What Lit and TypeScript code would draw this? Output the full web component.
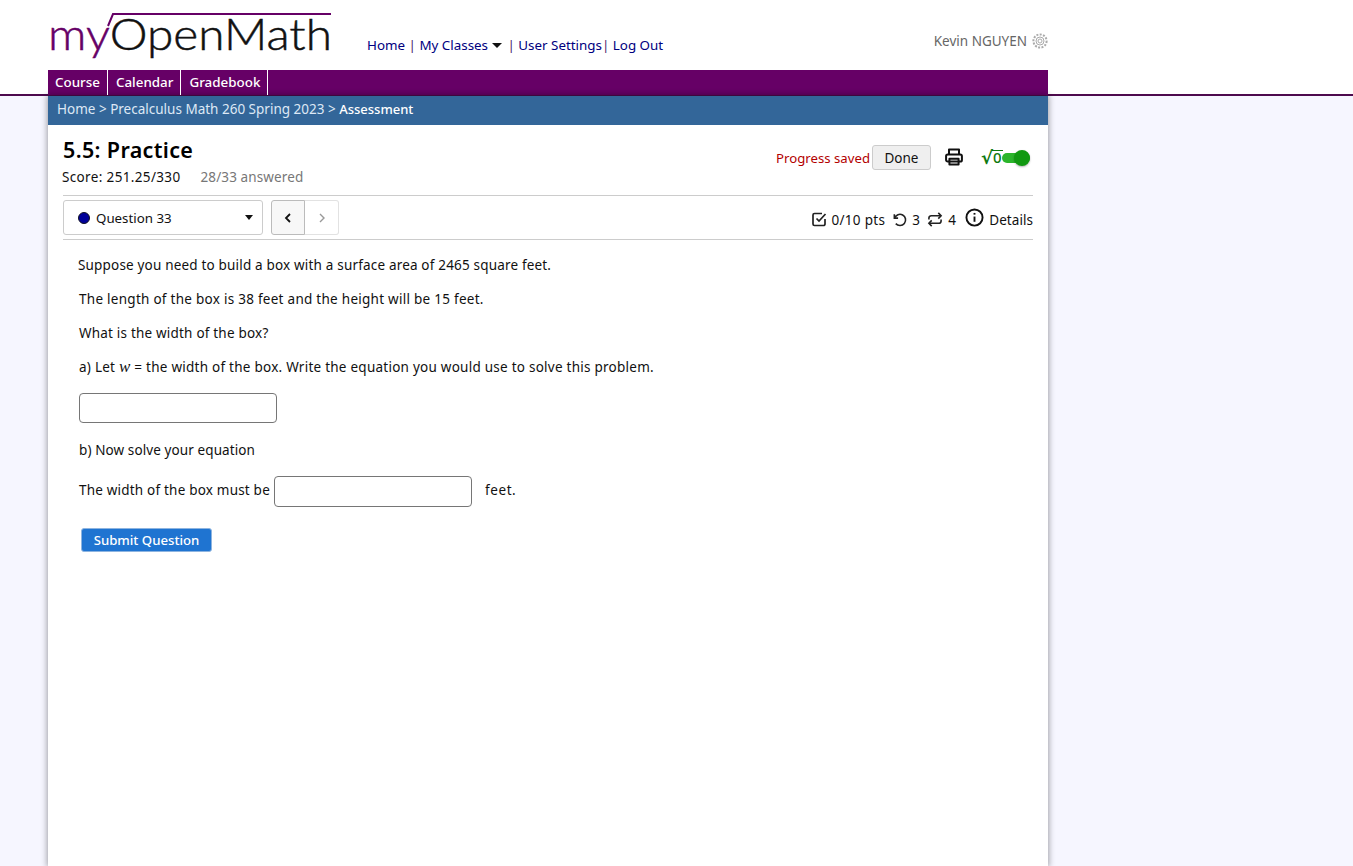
import { LitElement, html, css } from "lit";
import { customElement } from "lit/decorators.js";

@customElement("app-root")
export class AppRoot extends LitElement {
  static styles = css`
    :host { display: block; height: 866px; overflow: hidden; background: #f6f6ff; font-family: "Noto Sans", "DejaVu Sans", sans-serif; font-size: 13.5px; color: #111; position: relative; }
    * { box-sizing: border-box; }
    .top { background: #fff; height: 96px; border-bottom: 2px solid #4d0a4d; }
    .wrap { width: 1000px; margin-left: 48px; }
    .head { height: 70px; display: flex; position: relative; }
    .logo { width: 290px; height: 70px; flex: none; display: block; margin-left: -2px; overflow: visible; }
    .logo text { font-family: Lato, sans-serif; font-weight: 300; font-size: 44px; stroke-width: .5px; }
    .logo .my { fill: #660066; stroke: #660066; }
    .logo .om { fill: #111; stroke: #111; }
    .links { display: flex; margin-left: 31px; padding-top: 36px; color: #000080; white-space: pre; height: 20px; line-height: 19px; font-size: 13.38px; }
    .sep { color: #4b1d6b; }
    .caret { display: inline-block; width: 0; height: 0; border: 5px solid transparent; border-top: 5px solid #111; border-bottom: 0; margin: 7px 2px 0 4px; }
    .user { margin-left: auto; display: flex; align-items: center; gap: 5px; height: 20px; margin-top: 31px; color: #666; }
    .tabs { display: flex; height: 25px; background: #660066; font-size: 13.4px; }
    .tab { color: #fff; font-weight: 500; padding: 0 7px 0 7px; line-height: 25px; border-right: 1px solid #fff; }
    .tab + .tab { padding-left: 8px; }
    .crumb { height: 29px; background: #336699; color: #dde8f5; line-height: 27px; padding-left: 9px; font-weight: 400; }
    .crumb b { color: #fff; font-weight: 500; font-size: 13px; }
    .page { height: 770px; background: #fff; box-shadow: 0 0 6px 1px rgba(0,0,0,.35); }
    .body { padding: 0 15px; }
    .titlebar { height: 71px; display: flex; justify-content: space-between; border-bottom: 1px solid #ccc; }
    h1 { margin: 10px 0 0; font-size: 21.5px; line-height: 30px; font-weight: 600; color: #000; letter-spacing: .35px; }
    .score { display: flex; gap: 20px; margin-top: 2px; line-height: 20px; letter-spacing: .35px; margin-left: -1px; }
    .score span + span { color: #777; letter-spacing: .12px; }
    .actions { display: flex; align-items: flex-start; padding-top: 20px; padding-right: 3px; }
    .saved { color: #b30000; line-height: 26px; margin-right: 2px; font-size: 13.2px; }
    .done { height: 25px; width: 59px; background: #efefef; border: 1px solid #ccc; border-radius: 3px; text-align: center; line-height: 24px; }
    .print { margin: 2px 0 0 13px; }
    .sqrt { display: flex; color: #0f7a0f; font-weight: 600; margin-left: 17px; font-size: 18px; line-height: 25px; width: 21px; }
    .zero { display: inline-block; height: 14px; line-height: 13px; margin-top: 5px; border-top: 1.5px solid #0f7a0f; font-size: 15px; font-weight: 500; padding: 0 1px; margin-left: -1px; }
    .toggle { position: relative; width: 28px; height: 10px; margin-top: 8px; background: #2bb52b; border-radius: 5px; }
    .knob { position: absolute; right: 0; top: -3px; width: 16px; height: 16px; border-radius: 50%; background: #119911; box-shadow: 0 1px 2px rgba(0,0,0,.3); }
    .qbar { height: 44px; display: flex; align-items: flex-start; border-bottom: 1px solid #ccc; padding-top: 4px; }
    .select { width: 200px; height: 35px; border: 1px solid #ccc; border-radius: 3px; display: flex; align-items: center; padding: 0 9px 0 14px; gap: 6px; font-size: 13.3px; }
    .dot { width: 12px; height: 12px; border-radius: 50%; background: #000099; border: 1px solid #112; flex: none; }
    .arrow { margin-left: auto; width: 0; height: 0; border: 4px solid transparent; border-top: 5px solid #111; border-bottom: 0; }
    .pager { display: flex; margin-left: 8px; height: 35px; }
    .pager div { width: 34px; display: flex; align-items: center; justify-content: center; border: 1px solid #e2e2e2; border-left: 0; border-radius: 0 3px 3px 0; }
    .pager div:first-child { background: #f7f7f7; border: 1px solid #bbb; border-radius: 3px 0 0 3px; }
    .stats { margin-left: auto; display: flex; align-items: center; height: 30px; margin-top: 5px; letter-spacing: .3px; }
    .stats svg { display: block; }
    .stats .item { display: flex; align-items: center; gap: 5px; margin-left: 7px; }
    .stats .item svg { margin-top: -2px; }
    .stats .check { gap: 4px; }
    .stats .info { gap: 5px; margin-left: 9px; }
    .stats .info svg { margin-top: -5px; }
    .stats .info span { letter-spacing: .05px; }
    .q { padding: 15px 0 0 16px; letter-spacing: .18px; }
    p { margin: 0; line-height: 20px; }
    .gap { margin-bottom: 14px; }
    .l1 { margin-left: -1px; }
    .l2 { letter-spacing: .27px; }
    .l3 { letter-spacing: .2px; }
    .l4 { letter-spacing: .25px; }
    .w { font-family: "Liberation Serif", serif; font-style: italic; font-size: 17px; }
    input { display: block; width: 198px; height: 30px; border: 1px solid #767676; border-radius: 4px; background: #fff; padding: 0; margin: 0; }
    .first { margin-top: 16px; }
    .b { margin-top: 17px; letter-spacing: .1px; }
    .line { display: flex; align-items: center; height: 31px; margin: 16px 0 21px; letter-spacing: .2px; }
    .line span { margin-top: -3px; }
    .line .ft { letter-spacing: .6px; }
    .line input { margin: 0 13px 0 4px; height: 31px; }
    .submit { margin-left: 2px; width: 131px; height: 24px; border: 1px solid #8db4e0; border-radius: 3px; background: #1f74d1; color: #fff; font-weight: 500; font-size: 13.2px; text-align: center; line-height: 22px; letter-spacing: 0; }
  `;

  render() {
    return html`
      <div class="top">
        <div class="wrap">
          <div class="head">
            <svg class="logo" viewBox="0 0 290 70">
              <path d="M62 26 L67 14 H285" fill="none" stroke="#660066" stroke-width="2"/>
              <text x="2" y="50" textLength="284" lengthAdjust="spacingAndGlyphs"><tspan class="my">my</tspan><tspan class="om">OpenMath</tspan></text>
            </svg>
            <div class="links"><span>Home</span><span class="sep"> | </span><span>My Classes</span><span class="caret"></span><span class="sep"> | </span><span>User Settings</span><span class="sep">| </span><span>Log Out</span></div>
            <div class="user">
              <span>Kevin NGUYEN</span>
              <svg width="16" height="16" viewBox="0 0 16 16" fill="none" stroke="#aaa"><circle cx="8" cy="8" r="2"/><circle cx="8" cy="8" r="4"/><circle cx="8" cy="8" r="6.6" stroke-width="2" stroke-dasharray="2 1.4"/></svg>
            </div>
          </div>
          <div class="tabs"><div class="tab">Course</div><div class="tab">Calendar</div><div class="tab">Gradebook</div></div>
        </div>
      </div>
      <div class="wrap page">
        <div class="crumb">Home &gt; Precalculus Math 260 Spring 2023 &gt; <b>Assessment</b></div>
        <div class="body">
          <div class="titlebar">
            <div>
              <h1>5.5: Practice</h1>
              <div class="score"><span>Score: 251.25/330</span><span>28/33 answered</span></div>
            </div>
            <div class="actions">
              <span class="saved">Progress saved</span>
              <div class="done">Done</div>
              <svg class="print" width="20" height="20" viewBox="0 0 24 24" fill="none" stroke="#111" stroke-width="2.4" stroke-linejoin="round"><path d="M6 9V3h12v6"/><rect x="2.5" y="9" width="19" height="8.5" rx="2"/><rect x="6.5" y="14" width="11" height="7"/></svg>
              <span class="sqrt"><span>√</span><span class="zero">0</span></span>
              <div class="toggle"><div class="knob"></div></div>
            </div>
          </div>
          <div class="qbar">
            <div class="select"><span class="dot"></span><span>Question 33</span><span class="arrow"></span></div>
            <div class="pager">
              <div><svg width="10" height="12" viewBox="0 0 10 12" fill="none" stroke="#111" stroke-width="1.8"><path d="M7 2 3 6l4 4"/></svg></div>
              <div><svg width="10" height="12" viewBox="0 0 10 12" fill="none" stroke="#999" stroke-width="1.4"><path d="M3 2l4 4-4 4"/></svg></div>
            </div>
            <div class="stats">
              <div class="item check"><svg width="16" height="16" viewBox="0 0 16 16" fill="none" stroke="#222" stroke-width="1.7"><path d="M14 8v5a1.5 1.5 0 0 1-1.5 1.5h-9A1.5 1.5 0 0 1 2 13V4a1.5 1.5 0 0 1 1.5-1.5H11"/><path d="M5.5 7.5 8 10l6.5-7"/></svg><span>0/10 pts</span></div>
              <div class="item"><svg width="15" height="15" viewBox="0 0 16 16" fill="none" stroke="#222" stroke-width="1.7"><path d="M2.5 2.5v4h4"/><path d="M2.8 6.5A6 6 0 1 1 4 12.4"/></svg><span>3</span></div>
              <div class="item"><svg width="16" height="15" viewBox="0 0 16 16" fill="none" stroke="#222" stroke-width="1.7"><path d="M11.5 1l3 3-3 3"/><path d="M14 4H4a2.5 2.5 0 0 0-2.5 2.5V8"/><path d="M4.5 15l-3-3 3-3"/><path d="M2 12h10a2.5 2.5 0 0 0 2.5-2.5V8"/></svg><span>4</span></div>
              <div class="item info"><svg width="19" height="19" viewBox="0 0 20 20" fill="none" stroke="#111" stroke-width="2"><circle cx="10" cy="10" r="8.5"/><path d="M10 9v5.5"/><path d="M10 5.2v1.8"/></svg><span>Details</span></div>
            </div>
          </div>
          <div class="q">
            <p class="gap l1">Suppose you need to build a box with a surface area of 2465 square feet.</p>
            <p class="gap l2">The length of the box is 38 feet and the height will be 15 feet.</p>
            <p class="gap l3">What is the width of the box?</p>
            <p class="l4">a) Let <span class="w">w</span> = the width of the box. Write the equation you would use to solve this problem.</p>
            <input class="first" aria-label="equation" />
            <p class="b">b) Now solve your equation</p>
            <div class="line"><span>The width of the box must be</span><input aria-label="width" /><span class="ft">feet.</span></div>
            <div class="submit">Submit Question</div>
          </div>
        </div>
      </div>
    `;
  }
}
